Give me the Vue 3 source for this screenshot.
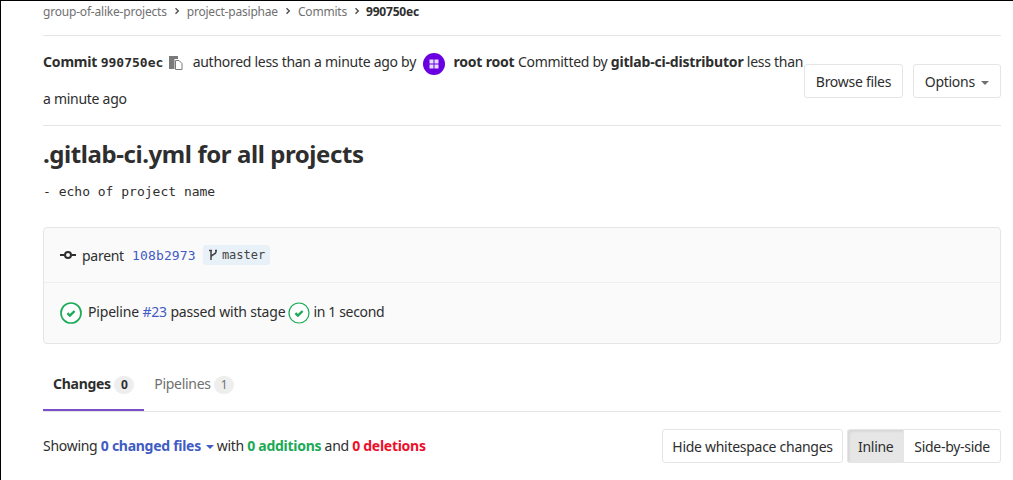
<template>
  <div class="page">
    <nav class="crumbs">
      <a>group-of-alike-projects</a>
      <svg class="chev" width="8" height="8" viewBox="0 0 8 8"><path d="M2.500 1.200 5.300 4 2.500 6.800" fill="none" stroke="#4f4f4f" stroke-width="1.400" /></svg>
      <a>project-pasiphae</a>
      <svg class="chev" width="8" height="8" viewBox="0 0 8 8"><path d="M2.500 1.200 5.300 4 2.500 6.800" fill="none" stroke="#4f4f4f" stroke-width="1.400" /></svg>
      <a>Commits</a>
      <svg class="chev" width="8" height="8" viewBox="0 0 8 8"><path d="M2.500 1.200 5.300 4 2.500 6.800" fill="none" stroke="#4f4f4f" stroke-width="1.400" /></svg>
      <strong class="current">990750ec</strong>
    </nav>

    <header class="commit-head">
      <div class="commit-info">
        <strong>Commit <span class="commit-sha">990750ec</span></strong>
        <svg class="copy" width="15" height="15" viewBox="0 0 15 15">
          <path d="M1 1h9v3H6.500v10H1z" fill="#7a7a7a" />
          <path d="M7.500 5.500h3.500l3 3v6H7.500z" fill="#fff" stroke="#7a7a7a" stroke-width="1" />
        </svg>
        authored less than a minute ago by
        <svg class="avatar" width="22" height="22" viewBox="0 0 22 22">
          <circle cx="11" cy="11" r="11" fill="#6a00e0" />
          <path d="M6.500 6.500h4v4h-4zM11.500 6.500h4v4h-4zM6.500 11.500h4v4h-4zM11.500 11.500h4v4h-4z" fill="#e6dcff" />
        </svg>
        <strong class="author">root root</strong> Committed by <strong>gitlab-ci-distributor</strong> less than a minute ago
      </div>
      <div class="head-actions">
        <button class="btn browse">Browse files</button>
        <button class="btn options">Options <span class="caret"></span></button>
      </div>
    </header>

    <h3 class="title">.gitlab-ci.yml for all projects</h3>
    <pre class="message">- echo of project name</pre>

    <section class="info-card">
      <div class="info-row parent-row">
        <svg class="commit-icon" width="16" height="16" viewBox="0 0 16 16">
          <circle cx="8" cy="8" r="3" fill="none" stroke="#2e2e2e" stroke-width="2" />
          <path d="M0 8h4.500M11.500 8H16" stroke="#2e2e2e" stroke-width="2" />
        </svg>
        <span class="parent-label">parent</span>
        <a class="sha">108b2973</a>
        <span class="branch">
          <svg width="10" height="14" viewBox="0 0 10 14">
            <path d="M3 2v10M8 2v2C8 6.500 3 6.500 3 9" fill="none" stroke="#444" stroke-width="1.500" />
            <path d="M1 2.500h3M7 2.500h2" stroke="#444" stroke-width="1.500" />
          </svg>
          master
        </span>
      </div>
      <div class="info-row pipeline-row">
        <svg class="status" width="22" height="22" viewBox="0 0 22 22">
          <circle cx="11" cy="11" r="10" fill="#fff" stroke="#1aaa55" stroke-width="1.700" />
          <path d="M7.400 11.200 9.900 13.600 14.600 9" fill="none" stroke="#1aaa55" stroke-width="2.400" />
        </svg>
        <span class="pipeline-text">Pipeline <a>#23</a> passed with stage</span>
        <svg class="status stage" width="22" height="22" viewBox="0 0 22 22">
          <circle cx="11" cy="11" r="10" fill="#fff" stroke="#1aaa55" stroke-width="1.200" />
          <path d="M7.400 11.200 9.900 13.600 14.600 9" fill="none" stroke="#1aaa55" stroke-width="2.400" />
        </svg>
        <span class="stage-time">in 1 second</span>
      </div>
    </section>

    <div class="tabs">
      <div class="tab active">Changes <span class="count">0</span></div>
      <div class="tab second">Pipelines <span class="count">1</span></div>
    </div>

    <div class="files-row">
      <div class="stats">
        Showing <a class="changed">0 changed files <span class="caret blue"></span></a> with
        <strong class="add">0 additions</strong> and <strong class="del">0 deletions</strong>
      </div>
      <div class="files-actions">
        <button class="btn hide">Hide whitespace changes</button>
        <div class="btn-group">
          <button class="btn on">Inline</button>
          <button class="btn">Side-by-side</button>
        </div>
      </div>
    </div>
  </div>
</template>

<script setup>
</script>

<style>
html, body { background: #fff; }
</style>

<style scoped>
.page {
  box-sizing: border-box;
  width: 1013px;
  height: 480px;
  overflow: hidden;
  border-top: 1px solid #000;
  border-left: 1px solid #000;
  padding: 0 12px 0 42px;
  font-family: "Noto Sans", sans-serif;
  font-size: 14px;
  letter-spacing: -0.28px;
  color: #2e2e2e;
}

.crumbs {
  height: 35px;
  box-sizing: border-box;
  border-bottom: 1px solid #e5e5e5;
  display: flex;
  align-items: center;
  padding-bottom: 14px;
  font-size: 12px;
  letter-spacing: -0.2px;
  color: #707070;
}
.crumbs strong { color: #2e2e2e; }
.chev { margin: 0 6px 0 6px; }
.current { margin-left: -1px; }

.commit-head {
  display: flex;
  justify-content: space-between;
  height: 90px;
  box-sizing: border-box;
  border-bottom: 1px solid #e5e5e5;
  padding-top: 8px;
}
.commit-info { flex: none; width: 766px; margin-right: -5px; line-height: 36px; }
.commit-info strong { letter-spacing: -0.18px; }
.commit-sha { font-family: "DejaVu Sans Mono", monospace; font-size: 13px; letter-spacing: 0; }
.copy { vertical-align: -3px; margin: 0 6px 0 5px; }
.avatar { vertical-align: -8px; margin: 0 8px 0 4px; }

.head-actions { display: flex; gap: 10px; padding-top: 20px; align-items: flex-start; }
.btn {
  box-sizing: border-box;
  height: 34px;
  padding: 0 10px;
  background: #fff;
  border: 1px solid #e5e5e5;
  border-radius: 3px;
  font: inherit;
  letter-spacing: inherit;
  white-space: nowrap;
  color: #2e2e2e;
}
.browse { width: 99px; padding: 0; }
.options { width: 88px; padding: 0; }
.hide { padding: 0 9.5px; }
.caret {
  display: inline-block;
  border: 4px solid transparent;
  border-top: 4px solid #707070;
  border-bottom: 0;
  vertical-align: 2px;
  margin-left: 3px;
}
.caret.blue { border-top-color: #3f5bc4; margin: 0 -1px 0 2px; }

.title { margin: 13px 0 0; font-size: 24px; line-height: 30px; font-weight: 700; letter-spacing: -0.42px; }
.message {
  margin: 15px 0 0;
  font-family: "DejaVu Sans Mono", monospace;
  font-size: 13px;
  line-height: 16px;
  letter-spacing: 0;
}

.info-card {
  margin-top: 27px;
  height: 117px;
  box-sizing: border-box;
  background: #fafafa;
  border: 1px solid #e5e5e5;
  border-radius: 4px;
}
.info-row { display: flex; align-items: center; padding-left: 16px; }
.parent-row { height: 55px; box-sizing: border-box; border-bottom: 1px solid #eee; }
.pipeline-row { height: 59px; letter-spacing: -0.18px; }
.commit-icon { margin-right: 6px; }
.sha { margin-left: 8px; font-family: "DejaVu Sans Mono", monospace; font-size: 13px; letter-spacing: 0.17px; color: #3f5bc4; }
.branch {
  display: flex;
  align-items: center;
  gap: 4px;
  height: 20px;
  margin-left: 7px;
  padding: 0 5px;
  background: #e8f1f7;
  border-radius: 3px;
  font-family: "DejaVu Sans Mono", monospace;
  font-size: 12px;
  letter-spacing: 0;
  color: #444;
}
.pipeline-text { margin: 0 3px 2px 6px; }
.pipeline-text a { color: #3f5bc4; }
.stage { margin-right: 3px; }
.stage-time { margin-bottom: 2px; letter-spacing: -0.35px; }

.tabs {
  display: flex;
  margin-top: 16px;
  height: 52px;
  box-sizing: border-box;
  border-bottom: 1px solid #e5e5e5;
}
.tab {
  box-sizing: border-box;
  padding: 14px 10px 0;
  height: 51px;
  color: #707070;
}
.tab.second { margin-left: -1px; padding-left: 11px; }
.tab.active {
  color: #2e2e2e;
  font-weight: 700;
  border-bottom: 2px solid #7c4fc9;
}
.count {
  display: inline-block;
  min-width: 20px;
  height: 18px;
  line-height: 18px;
  text-align: center;
  border-radius: 9px;
  background: #eee;
  font-size: 12px;
  font-weight: 400;
}
.tab.active .count { font-weight: 700; }

.files-row { display: flex; justify-content: space-between; align-items: center; margin-top: 17px; }
.stats { margin-bottom: 1px; }
.changed { color: #3f5bc4; font-weight: 700; }
.add { color: #1aaa55; }
.del { color: #ee0f2b; }
.files-actions { display: flex; gap: 4px; }
.btn-group { display: flex; }
.btn-group .btn:first-child { width: 56px; padding: 0; border-radius: 3px 0 0 3px; border-right: 0; }
.btn-group .btn:last-child { border-radius: 0 3px 3px 0; }
.btn.on { background: #e6e6e6; box-shadow: inset 2px 2px 2px rgba(0,0,0,0.06); }
</style>
